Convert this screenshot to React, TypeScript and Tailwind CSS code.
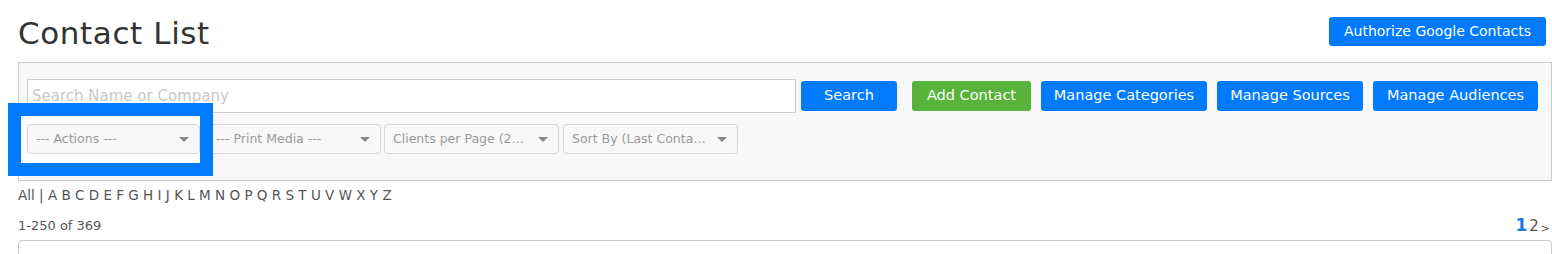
import React from 'react'

const font = { fontFamily: '"DejaVu Sans", "Noto Sans", sans-serif' }

const letters = 'ABCDEFGHIJKLMNOPQRSTUVWXYZ'.split('')

function Btn({ label, green, w }: { label: string; green?: boolean; w: string }) {
  return (
    <button
      type="button"
      className={`h-[30px] shrink-0 rounded-[3px] text-[14.5px] text-white ${w} ${green ? 'bg-[#58b33a]' : 'bg-[#007bff]'}`}
    >
      {label}
    </button>
  )
}

function Select({ label, w }: { label: string; w: string }) {
  return (
    <div
      className={`flex h-[30px] shrink-0 items-center justify-between rounded-[4px] border border-[#d6d6d6] bg-[#f8f8f8] pl-2 pr-[10px] text-[12.5px] text-[#9a9a9a] ${w}`}
    >
      <span className="truncate">{label}</span>
      <span className="ml-2 h-0 w-0 shrink-0 border-x-[5px] border-t-[5px] border-x-transparent border-t-[#888]" />
    </div>
  )
}

export default function App() {
  return (
    <div className="h-[254px] w-[1552px] overflow-hidden bg-white pl-[18px] text-[#333]" style={font}>
      <div className="flex items-start justify-between pr-[6px] pt-[17px]">
        <h1 className="text-[31px] font-normal leading-[32px] tracking-[0.6px] text-[#333]">Contact List</h1>
        <button type="button" className="h-[29px] w-[217px] rounded-[3px] bg-[#007bff] text-[14px] text-white">
          Authorize Google Contacts
        </button>
      </div>

      <div className="mt-[13px] h-[119px] border border-[#ccc] bg-[#f8f8f8] pl-[8px] pt-[16px]">
        <div className="flex items-center">
          <input
            placeholder="Search Name or Company"
            className="h-[34px] w-[769px] border border-[#ccc] bg-white px-[4px] text-[15px] outline-none placeholder:text-[#c8c8c8]"
          />
          <div className="ml-[5px]">
            <Btn label="Search" w="w-[96px]" />
          </div>
          <div className="ml-[15px] flex gap-[10px]">
            <Btn label="Add Contact" green w="w-[119px]" />
            <Btn label="Manage Categories" w="w-[166px]" />
            <Btn label="Manage Sources" w="w-[146px]" />
            <Btn label="Manage Audiences" w="w-[165px]" />
          </div>
        </div>
        <div className="mt-[11px] flex items-center">
          <div className="relative">
            <Select label="--- Actions ---" w="w-[173px]" />
            <div className="pointer-events-none absolute left-[-19px] top-[-21px] h-[73px] w-[205px] border-[13px] border-[#007bff] bg-white/80" />
            <div className="absolute left-0 top-0">
              <Select label="--- Actions ---" w="w-[173px]" />
            </div>
          </div>
          <div className="ml-[7px]">
            <Select label="--- Print Media ---" w="w-[174px]" />
          </div>
          <div className="ml-[3px]">
            <Select label="Clients per Page (250)" w="w-[175px]" />
          </div>
          <div className="ml-[4px]">
            <Select label="Sort By (Last Contacted)" w="w-[175px]" />
          </div>
        </div>
      </div>

      <div className="mt-[6px] text-[13.5px] leading-[16px] text-[#555]">
        <span>All</span> <span>|</span>{' '}
        {letters.map((l) => (
          <span key={l}>{l} </span>
        ))}
      </div>

      <div className="mt-[14px] flex items-end justify-between pr-[2px]">
        <span className="text-[13px] leading-[16px] text-[#555]">1-250 of 369</span>
        <span className="flex items-end gap-[2px] leading-none">
          <span className="text-[17px] font-bold text-[#1a73e8]">1</span>
          <span className="text-[15px] text-[#555]">2</span>
          <span className="text-[11px] text-[#555]">&gt;</span>
        </span>
      </div>

      <div className="mt-[6px] h-[40px] rounded-t-[4px] border border-[#ccc]" />
    </div>
  )
}
